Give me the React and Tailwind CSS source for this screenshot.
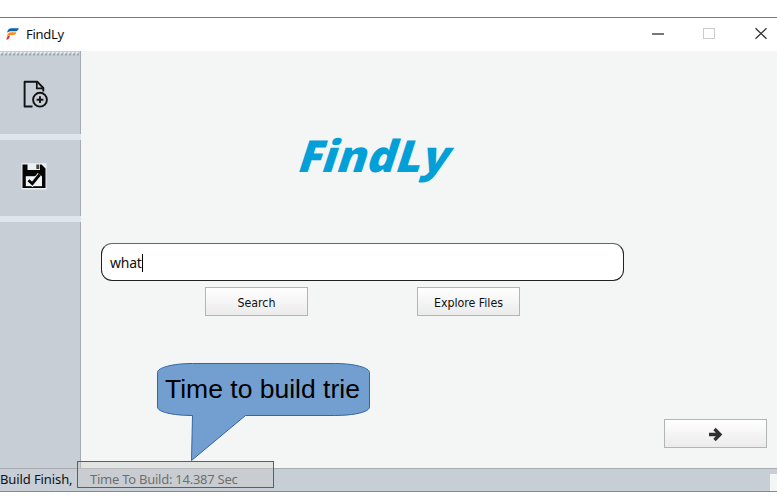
import React from "react";

function TitleBar() {
  return (
    <header className="flex h-[33px] shrink-0 items-center bg-white">
      <svg className="-mt-px ml-[6px] h-[12px] w-[13px]" viewBox="0 0 13 12">
        <path d="M1 4.8C1.7 1.5 3.2.2 5.5.2H12.8C12.2 2.4 11 3.3 9 3.3H6C4 3.3 2.6 3.4 1 4.8Z" fill="#0b62b5" />
        <path d="M.8 8.6C1.3 5.5 3 4.3 5 4.3H10.4C9.7 6.6 8.4 7.2 6.7 7.2H4.5C3 7.2 2 7.5.8 8.6Z" fill="#fb8c1e" />
        <path d="M.5 12C.5 9.3 1.6 7.7 3.9 7.6C3.8 10 2.7 11.5.5 12Z" fill="#d8304a" />
      </svg>
      <span className="-mt-[2px] ml-[7px] w-[60px] text-[13px] leading-[18px] tracking-[-0.3px]">FindLy</span>
      <svg className="ml-auto h-[33px] w-[127px]" viewBox="0 0 127 33" fill="none">
        <path d="M2 16H14" stroke="#555" strokeWidth="1.6" />
        <rect x="53.5" y="10.5" width="11" height="10" stroke="#ccc" />
        <path d="M105.5 10.3L116.5 20.8M116.5 10.3L105.5 20.8" stroke="#333" strokeWidth="1.3" />
      </svg>
    </header>
  );
}

function AddFileIcon() {
  return (
    <svg className="ml-[23px] h-[28px] w-[26px]" viewBox="0 0 26 28" fill="none" stroke="#101214" strokeWidth="1.9">
      <path d="M9.5 26.5H1.6V1.7H14.2L20.3 8V11.5" strokeLinejoin="round" />
      <path d="M13.8 1.7V8.4H20.3" strokeWidth="1.7" />
      <circle cx="17" cy="19.7" r="6.9" />
      <path d="M13.6 19.7H20.4M17 16.3V23.1" />
    </svg>
  );
}

function SaveIcon() {
  return (
    <svg className="ml-[21px] h-[27px] w-[26px]" viewBox="0 0 26 27">
      <rect x=".5" y=".2" width="25" height="26.3" fill="#eceff1" />
      <path d="M1.5 1.5H6.5V7H19V1.5H20.5L24.5 5.5V25H1.5Z" fill="#050505" />
      <path d="M15.3 1.5H18.3V6H15.3Z" fill="#444" />
      <path d="M4.8 13.2H21V23.2H4.8Z" fill="#f1f3f4" />
      <path d="M7.5 17.2L11.3 20.7L18.7 11.5" fill="none" stroke="#f1f3f4" strokeWidth="5" />
      <path d="M7.5 17.2L11.3 20.7L18.7 11.5" fill="none" stroke="#050505" strokeWidth="2.9" />
    </svg>
  );
}

function Sidebar() {
  return (
    <aside className="flex w-[81px] shrink-0 flex-col bg-[#c7ced6]">
      <div className="flex h-[83px] flex-col border-r border-[#a5abb2]">
        <svg className="h-[5px] w-[80px] shrink-0" viewBox="0 0 80 5">
          <path d="M0 2H80" stroke="#e7ebee" strokeWidth="2" strokeDasharray="2 2" />
          <path d="M1 3.5H80" stroke="#9ea6ae" strokeWidth="2" strokeDasharray="2 2" />
        </svg>
        <div className="pt-[24px]"><AddFileIcon /></div>
      </div>
      <div className="h-[6px] bg-[#dfe4ed]" />
      <div className="flex h-[76px] border-r border-[#a5abb2] pt-[23px]"><SaveIcon /></div>
      <div className="h-[6px] bg-[#dfe4ed]" />
      <div className="flex-1 border-r border-[#a5abb2]" />
    </aside>
  );
}

function PushButton({ children }) {
  return (
    <button className="flex h-[29px] w-[103px] items-center justify-center border border-[#b2b5b6] bg-linear-to-b from-white to-[#ebebeb] pt-[3px] font-['DejaVu_Sans_Condensed','DejaVu_Sans',sans-serif] text-[12.3px] tracking-[-0.02px] text-[#111] [font-stretch:condensed]">
      {children}
    </button>
  );
}

function Main() {
  return (
    <main className="flex flex-1 flex-col bg-[#f4f6f6]">
      <h1 className="ml-[220px] mt-[76px] h-[57px] w-[180px] origin-center -skew-x-[18deg] whitespace-nowrap font-['Open_Sans','Noto_Sans',sans-serif] text-[44px] font-extrabold leading-[57px] tracking-[0.5px] text-[#03a0d8]">
        FindLy
      </h1>
      <div className="ml-[20px] mt-[59px] flex h-[38px] w-[523px] items-center rounded-[11px] border border-[#222] border-t-[#666] bg-white pl-[8px] pt-px">
        <span className="text-[14px] leading-[18px] tracking-[-0.25px]">what</span>
        <span className="h-[18px] w-px bg-black" />
      </div>
      <div className="ml-[124px] mt-[6px] flex gap-[109px]">
        <PushButton>Search</PushButton>
        <PushButton>Explore Files</PushButton>
      </div>
      <div className="mb-[20px] ml-auto mr-[10px] mt-auto">
        <PushButton>
          <svg className="-mt-[2px] h-[15px] w-[15px]" viewBox="0 0 15 15" fill="none" stroke="#303030" strokeWidth="3.3">
            <path d="M1 7.5H12M6.5 2L12 7.5L6.5 13" />
          </svg>
        </PushButton>
      </div>
    </main>
  );
}

function StatusBar() {
  return (
    <footer className="flex h-[24px] shrink-0 border-b border-t border-b-[#858a90] border-t-[#a9adb0] bg-[#c7ced6] text-[13px] leading-[20px]">
      <span className="w-[90px] whitespace-nowrap tracking-[-0.1px]">Build Finish,</span>
      <span className="whitespace-nowrap tracking-[-0.25px] text-[#202224]">Time To Build: 14.387 Sec</span>
      <span className="ml-auto mt-[5px] w-[7px] bg-[#f4f6f6]" />
    </footer>
  );
}

function Callout() {
  return (
    <>
      <div className="absolute left-[77px] top-[461px] h-[27px] w-[197px] border border-[#3465a4] bg-[#cccccc]/45" />
      <svg className="absolute left-[156px] top-[362px] h-[100px] w-[215px]" viewBox="0 0 215 100">
        <path d="M36.5 1.5H178.5C198 1.5 213.5 5.5 213.5 10.5V45C213.5 50 198 53.5 178.5 53.5H89.5L35.5 98.5L36.5 53.5C17 53.5 1.5 50 1.5 45V10.5C1.5 5.5 17 1.5 36.5 1.5Z" fill="#729fcf" stroke="#3465a4" />
      </svg>
      <div className="absolute left-[165px] top-[374px] whitespace-nowrap font-['Liberation_Sans',Arial,sans-serif] text-[26.5px] leading-[30px] text-black">
        Time to build trie
      </div>
    </>
  );
}

export default function App() {
  return (
    <div className="relative flex h-[504px] w-[777px] flex-col overflow-hidden bg-white font-['Noto_Sans',sans-serif] text-[#111]">
      <div className="h-[18px] shrink-0 border-b border-[#777]" />
      <TitleBar />
      <div className="flex h-[417px] shrink-0">
        <Sidebar />
        <Main />
      </div>
      <StatusBar />
      <Callout />
    </div>
  );
}
